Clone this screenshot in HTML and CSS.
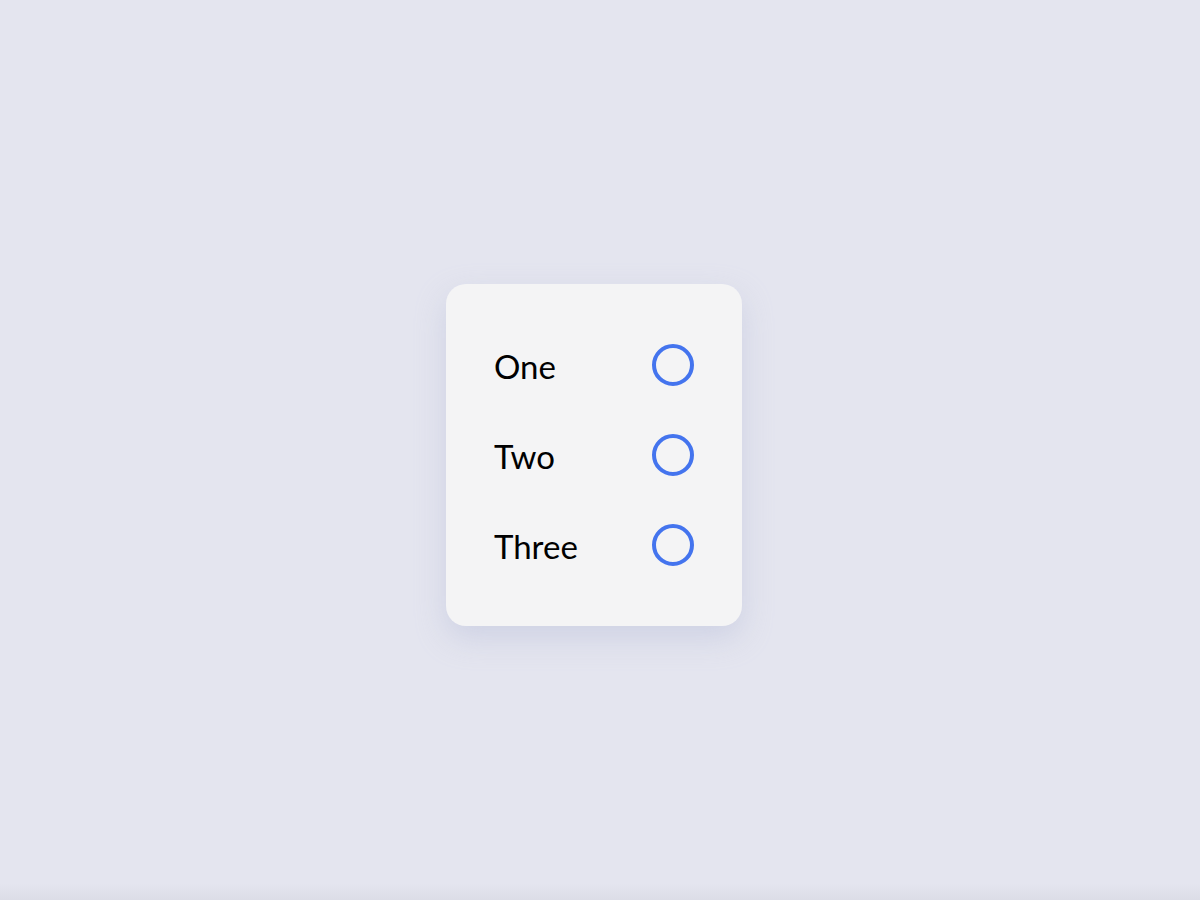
FILE: index.html
```html
<!DOCTYPE html>
<html lang="en">
<head>
    <meta charset="UTF-8">
    <meta name="viewport" content="width=device-width, initial-scale=1.0">
    <title>Radio Options</title>
    <link rel="stylesheet" href="styles.css">
</head>
<body>
    <div class="card">
        <label class="option">
            <span class="option-text">One</span>
            <input type="radio" name="choice" class="radio" />
        </label>
        <label class="option">
            <span class="option-text">Two</span>
            <input type="radio" name="choice" class="radio" />
        </label>
        <label class="option">
            <span class="option-text">Three</span>
            <input type="radio" name="choice" class="radio" />
        </label>
    </div>
</body>
</html>
```

FILE: styles.css
```css
body {
    font-family: Lato, "Open Sans", sans-serif;
    background: linear-gradient(to bottom, #e4e5ef calc(100% - 16px), #dcdde7);
    margin: 0;
    padding: 0;
    display: flex;
    justify-content: center;
    align-items: center;
    min-height: 100vh;
}

.card {
    width: 200px;
    padding: 60px 48px;
    margin: 10px 12px 0 0;
    background-color: #f4f4f5;
    border-radius: 20px;
    box-shadow: 0 12px 30px rgba(180, 186, 214, 0.45);
    display: flex;
    flex-direction: column;
    gap: 48px;
}

.option {
    display: flex;
    justify-content: space-between;
    align-items: center;
    height: 42px;
    cursor: pointer;
}

.option-text {
    font-size: 33px;
    color: #000;
    padding-top: 2px;
}

.radio {
    appearance: none;
    -webkit-appearance: none;
    margin: 0;
    width: 42px;
    height: 42px;
    border: 4px solid #4474ee;
    border-radius: 50%;
    box-sizing: border-box;
    cursor: pointer;
}

.radio:checked {
    background: radial-gradient(#4474ee 45%, transparent 47%);
}
```
